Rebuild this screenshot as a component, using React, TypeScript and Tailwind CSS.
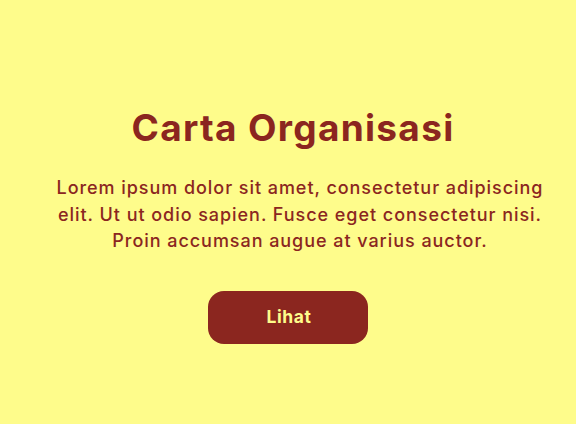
export default function App() {
  return (
    <div className="flex h-[424px] w-[576px] flex-col items-center bg-[#fefc8b] pt-[104px] font-['Inter',sans-serif] text-[#8b261f]">
      <h1 className="pl-[10px] text-[37px] font-bold leading-[48px] tracking-[1.3px]">Carta Organisasi</h1>
      <p className="mt-[23px] w-[496px] translate-x-[12px] text-center text-[18px] font-medium leading-[26.5px] tracking-[0.95px]">
        Lorem ipsum dolor sit amet, consectetur adipiscing elit. Ut ut odio sapien. Fusce eget consectetur nisi. Proin accumsan augue at varius auctor.
      </p>
      <button className="mt-[36px] h-[53px] w-[160px] rounded-[16px] bg-[#8b261f] pl-[2px] text-[17.5px] font-bold tracking-[0.6px] text-[#fefc8b]">
        Lihat
      </button>
    </div>
  );
}
